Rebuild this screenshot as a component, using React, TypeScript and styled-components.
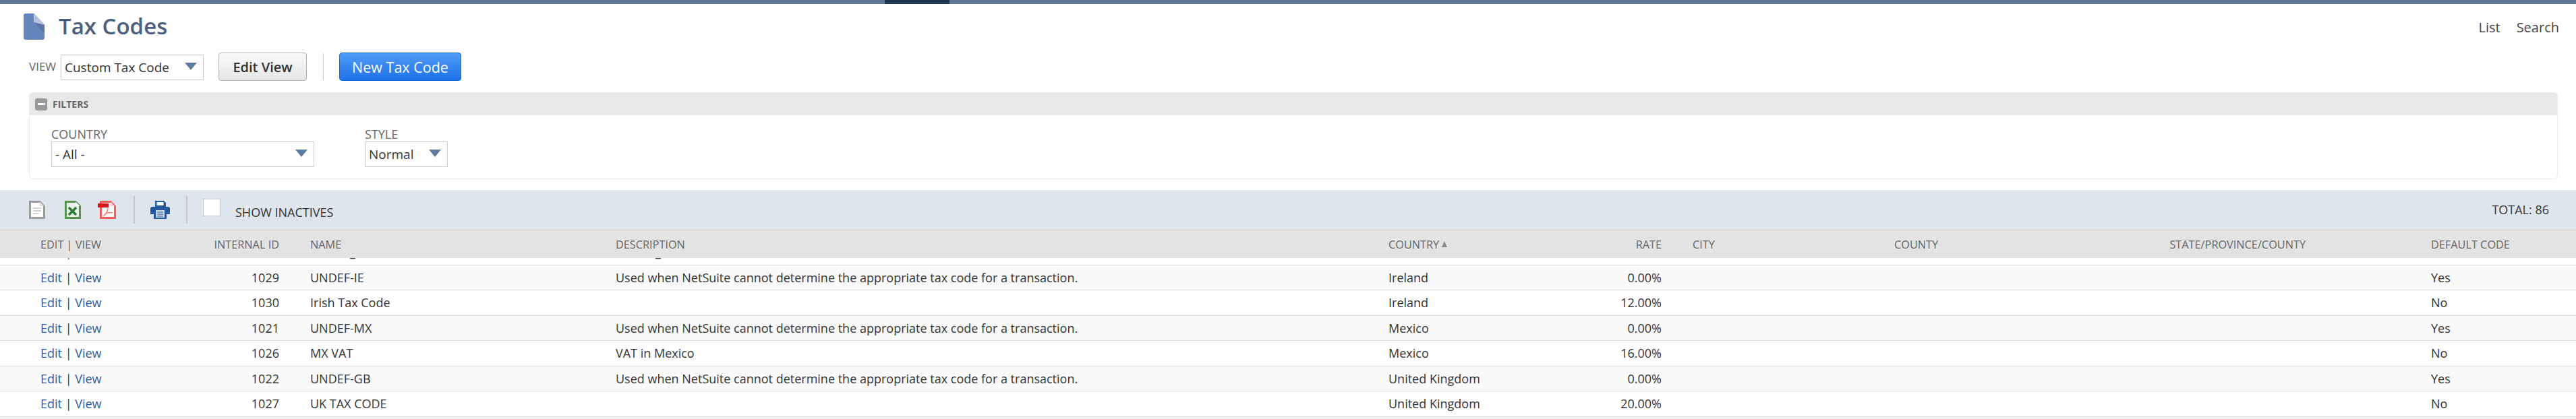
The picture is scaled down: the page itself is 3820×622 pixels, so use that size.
import styled, { createGlobalStyle } from "styled-components";

const GlobalStyle = createGlobalStyle`
  body {
    margin: 0;
    background: #fff;
    font-family: "Open Sans", "Liberation Sans", sans-serif;
    color: #333;
  }
`;

const columns = "203px 197px 453px 1146px 264px 187px 299px 314px 342px 1fr";

const TopBar = styled.div`
  height: 6px;
  background: #627797;
  display: flex;
  justify-content: flex-start;
  padding-left: 1312px;
`;

const TopBarTab = styled.div`
  width: 96px;
  background: #223656;
`;

const TitleRow = styled.header`
  height: 72px;
  box-sizing: border-box;
  padding: 14px 25px 0 35px;
  display: flex;
  align-items: flex-start;
`;

const Title = styled.h1`
  margin: -1px 0 0 21px;
  font-size: 33px;
  line-height: 40px;
  font-weight: 600;
  color: #4d5f7c;
`;

const TitleLinks = styled.nav`
  margin-left: auto;
  display: flex;
  gap: 24px;
  padding-top: 9px;
  font-size: 20px;
  line-height: 24px;
  color: #444;
`;

const ViewRow = styled.div`
  display: flex;
  align-items: center;
  height: 42px;
  padding-left: 43px;
`;

const ViewLabel = styled.span`
  width: 47px;
  font-size: 17px;
  margin-top: -1px;
  color: #666;
`;

const Select = styled.div<{ $width: number }>`
  width: ${(p) => p.$width}px;
  height: 38px;
  box-sizing: border-box;
  border: 1px solid #ccc;
  background: #fff;
  display: flex;
  align-items: center;
  padding: 0 9px 0 5px;
  font-size: 19px;
  color: #333;
`;

const ViewSelect = styled(Select)`
  margin-top: 2px;
`;

const Arrow = styled.span`
  margin-left: auto;
  width: 0;
  height: 0;
  margin-top: -3px;
  border-left: 9px solid transparent;
  border-right: 9px solid transparent;
  border-top: 11px solid #5f7a9f;
`;

const Button = styled.button<{ $primary?: boolean; $width: number }>`
  width: ${(p) => p.$width}px;
  height: 42px;
  border-radius: 4px;
  font-family: inherit;
  font-size: ${(p) => (p.$primary ? "21.5px" : "20px")};
  font-weight: ${(p) => (p.$primary ? 400 : 600)};
  padding: 0;
  border: 1px solid ${(p) => (p.$primary ? "#1667d2" : "#b5b5b5")};
  color: ${(p) => (p.$primary ? "#fff" : "#333")};
  background: ${(p) =>
    p.$primary
      ? "linear-gradient(#4f9cf8, #1f72e8)"
      : "linear-gradient(#fafafa, #e5e5e5)"};
`;

const EditViewButton = styled(Button)`
  margin-left: 22px;
`;

const ViewDivider = styled.span`
  width: 1px;
  height: 40px;
  background: #ccc;
  margin: 0 23px 0 24px;
`;

const FilterBox = styled.section`
  margin: 17px 27px 0 43px;
  height: 129px;
  box-sizing: border-box;
  border: 1px solid #e9e9e9;
  border-radius: 6px;
  overflow: hidden;
`;

const FilterHeader = styled.div`
  height: 33px;
  background: #e8e8e8;
  display: flex;
  align-items: center;
  gap: 8px;
  padding-left: 8px;
  font-size: 14px;
  font-weight: 700;
  color: #666;
`;

const CollapseIcon = styled.span`
  width: 18px;
  height: 18px;
  border-radius: 3px;
  background: #9a9a9a;
  display: flex;
  align-items: center;
  justify-content: center;
  &::after {
    content: "";
    width: 11px;
    height: 3px;
    background: #fff;
  }
`;

const FilterFields = styled.div`
  display: flex;
  gap: 75px;
  padding: 18px 0 0 32px;
`;

const Field = styled.div`
  display: flex;
  flex-direction: column;
`;

const FieldLabel = styled.label`
  font-size: 18px;
  line-height: 21px;
  color: #666;
`;

const Toolbar = styled.div`
  margin-top: 16px;
  height: 60px;
  box-sizing: border-box;
  background: #dfe5ed;
  border-bottom: 1px solid #c9cbcf;
  display: flex;
  align-items: center;
  padding: 0 40px 0 43px;
`;

const ToolIcon = styled.svg<{ $gap: number }>`
  display: block;
  margin-right: ${(p) => p.$gap}px;
`;

const ToolDivider = styled.span<{ $after: number }>`
  width: 2px;
  height: 41px;
  background: #c5cad1;
  margin-right: ${(p) => p.$after}px;
`;

const CheckBox = styled.span`
  width: 26px;
  height: 26px;
  box-sizing: border-box;
  background: #fff;
  border: 1px solid #ccc;
  margin: -8px 22px 0 0;
`;

const ToolLabel = styled.span`
  font-size: 18px;
  padding-top: 6px;
  color: #333;
`;

const Total = styled.span`
  margin-left: auto;
  margin-top: -2px;
  font-size: 18px;
  color: #333;
`;

const HeaderRow = styled.div`
  height: 41px;
  background: #e3e3e3;
  display: grid;
  grid-template-columns: ${columns};
  padding-left: 37px;
  align-items: center;
  font-size: 16.3px;
  color: #666;
`;

const Cell = styled.div<{ $right?: boolean; $lead?: boolean }>`
  padding: 0 23px;
  padding-left: ${(p) => (p.$lead ? "163px" : "23px")};
  text-align: ${(p) => (p.$right ? "right" : "left")};
  white-space: nowrap;
`;

const SortMark = styled.span`
  display: inline-block;
  margin-left: 4px;
  vertical-align: 2px;
  border-left: 4px solid transparent;
  border-right: 4px solid transparent;
  border-bottom: 9px solid #8a8a8a;
`;

const TableViewport = styled.div`
  height: 239px;
  overflow: hidden;
`;

const RowList = styled.div`
  margin-top: -27px;
`;

const Row = styled.div`
  height: 37.5px;
  box-sizing: border-box;
  border-bottom: 1px solid #dbdbdb;
  display: grid;
  grid-template-columns: ${columns};
  padding-left: 37px;
  align-items: center;
  font-size: 18px;
  color: #333;
  &:nth-child(even) {
    background: #fafafa;
  }
`;

const RowLink = styled.a`
  color: #2a5c9f;
  text-decoration: none;
`;

const DocIcon = () => (
  <svg width="31" height="39" viewBox="0 0 31 39">
    <path d="M3 0H15L31 17V36a3 3 0 0 1-3 3H3a3 3 0 0 1-3-3V3a3 3 0 0 1 3-3Z" fill="#6586bd" />
    <path d="M15 0L31 17V30L15 12Z" fill="#5a76a8" />
    <path d="M15 0L31 17L15 13Z" fill="#b4c4e0" />
  </svg>
);

const PlainDocIcon = () => (
  <ToolIcon $gap={29} width="24" height="27" viewBox="0 0 24 27">
    <path d="M1.5 1.5H16L22.5 8V25.5H1.5Z" fill="#fff" stroke="#9b9b9b" strokeWidth="3" />
    <path d="M16 1.5V8H22.5Z" fill="#dcdcdc" />
    <path d="M6 11H18M6 15H18M6 19H14" stroke="#c4c4c4" strokeWidth="1.5" />
  </ToolIcon>
);

const ExcelIcon = () => (
  <ToolIcon $gap={25} width="24" height="27" viewBox="0 0 24 27">
    <path d="M1.5 1.5H16L22.5 8V25.5H1.5Z" fill="#e9f1e6" stroke="#55934f" strokeWidth="3" />
    <path d="M16 1.5V8H22.5Z" fill="#fff" />
    <path d="M6 10L17 21M17 10L6 21" stroke="#2f7d32" strokeWidth="3.5" />
  </ToolIcon>
);

const PdfIcon = () => (
  <ToolIcon $gap={26} width="27" height="27" viewBox="0 0 27 27">
    <path d="M4.5 1.5H19L25.5 8V25.5H4.5Z" fill="#fff" stroke="#f55a5a" strokeWidth="3" />
    <path d="M19 1.5V8H25.5Z" fill="#fbc9c9" />
    <rect x="0" y="4" width="16" height="6" fill="#d9141c" />
    <path d="M15 11C15 16 11 21 9 22C11 18 17 17 22 18" fill="none" stroke="#f77" strokeWidth="1.5" />
  </ToolIcon>
);

const PrintIcon = () => (
  <ToolIcon $gap={24} width="29" height="27" viewBox="0 0 29 27">
    <path d="M7 0H20L23 3V9H7Z" fill="#24569e" />
    <rect x="9.5" y="2" width="10" height="5" fill="#fff" />
    <path d="M3 9H26a3 3 0 0 1 3 3V20H24V27H5V20H0V12a3 3 0 0 1 3-3Z" fill="#24569e" />
    <rect x="8" y="14" width="13" height="11" fill="#c8d6ea" />
    <path d="M10 17H19M10 20H19M10 23H19" stroke="#24569e" strokeWidth="1.2" />
  </ToolIcon>
);

const headers = [
  "EDIT | VIEW",
  "INTERNAL ID",
  "NAME",
  "DESCRIPTION",
  "COUNTRY",
  "RATE",
  "CITY",
  "COUNTY",
  "STATE/PROVINCE/COUNTY",
  "DEFAULT CODE",
];

const undefDescription =
  "Used when NetSuite cannot determine the appropriate tax code for a transaction.";

const rows = [
  { id: "1028", name: "Ireland_VAT", description: "Ireland_VAT", country: "Ireland", rate: "23.00%", isDefault: "No" },
  { id: "1029", name: "UNDEF-IE", description: undefDescription, country: "Ireland", rate: "0.00%", isDefault: "Yes" },
  { id: "1030", name: "Irish Tax Code", description: "", country: "Ireland", rate: "12.00%", isDefault: "No" },
  { id: "1021", name: "UNDEF-MX", description: undefDescription, country: "Mexico", rate: "0.00%", isDefault: "Yes" },
  { id: "1026", name: "MX VAT", description: "VAT in Mexico", country: "Mexico", rate: "16.00%", isDefault: "No" },
  { id: "1022", name: "UNDEF-GB", description: undefDescription, country: "United Kingdom", rate: "0.00%", isDefault: "Yes" },
  { id: "1027", name: "UK TAX CODE", description: "", country: "United Kingdom", rate: "20.00%", isDefault: "No" },
];

const rightAligned = [1, 5, 8];

const App = () => {
  return (
    <>
      <GlobalStyle />
      <TopBar>
        <TopBarTab />
      </TopBar>
      <TitleRow>
        <DocIcon />
        <Title>Tax Codes</Title>
        <TitleLinks>
          <span>List</span>
          <span>Search</span>
        </TitleLinks>
      </TitleRow>
      <ViewRow>
        <ViewLabel>VIEW</ViewLabel>
        <ViewSelect $width={212}>
          Custom Tax Code
          <Arrow />
        </ViewSelect>
        <EditViewButton $width={131}>Edit View</EditViewButton>
        <ViewDivider />
        <Button $primary $width={181}>
          New Tax Code
        </Button>
      </ViewRow>
      <FilterBox>
        <FilterHeader>
          <CollapseIcon />
          FILTERS
        </FilterHeader>
        <FilterFields>
          <Field>
            <FieldLabel>COUNTRY</FieldLabel>
            <Select $width={390}>
              - All -
              <Arrow />
            </Select>
          </Field>
          <Field>
            <FieldLabel>STYLE</FieldLabel>
            <Select $width={123}>
              Normal
              <Arrow />
            </Select>
          </Field>
        </FilterFields>
      </FilterBox>
      <Toolbar>
        <PlainDocIcon />
        <ExcelIcon />
        <PdfIcon />
        <ToolDivider $after={23} />
        <PrintIcon />
        <ToolDivider $after={23} />
        <CheckBox />
        <ToolLabel>SHOW INACTIVES</ToolLabel>
        <Total>TOTAL: 86</Total>
      </Toolbar>
      <HeaderRow>
        {headers.map((label, i) => (
          <Cell key={label} $right={rightAligned.includes(i)} $lead={i === 9}>
            {label}
            {label === "COUNTRY" && <SortMark />}
          </Cell>
        ))}
      </HeaderRow>
      <TableViewport>
        <RowList>
          {rows.map((row) => (
            <Row key={row.id}>
              <Cell>
                <RowLink href="#">Edit</RowLink> | <RowLink href="#">View</RowLink>
              </Cell>
              <Cell $right>{row.id}</Cell>
              <Cell>{row.name}</Cell>
              <Cell>{row.description}</Cell>
              <Cell>{row.country}</Cell>
              <Cell $right>{row.rate}</Cell>
              <Cell />
              <Cell />
              <Cell />
              <Cell $lead>{row.isDefault}</Cell>
            </Row>
          ))}
          <Row />
        </RowList>
      </TableViewport>
    </>
  );
};

export default App;
